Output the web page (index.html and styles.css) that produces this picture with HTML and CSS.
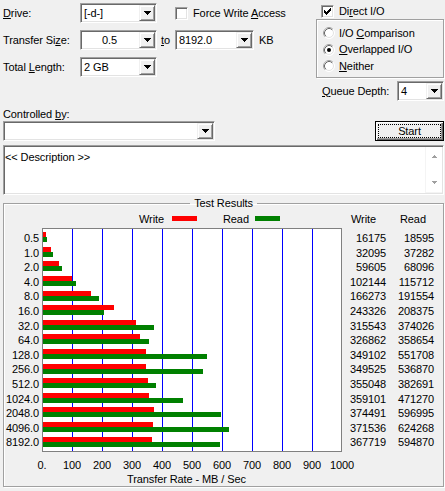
FILE: index.html
```html
<!DOCTYPE html>
<html>
<head>
<meta charset="utf-8">
<title>Disk Benchmark</title>
<link rel="stylesheet" href="styles.css">
</head>
<body>
<div class="app">
  <div class="top">
    <div class="left">
      <div class="row row1">
        <span class="lbl"><u>D</u>rive:</span>
        <div class="combo c-drive"><span class="cv">[-d-]</span><span class="dd"><svg width="7" height="4" viewBox="0 0 7 4"><path d="M0 0H7V1H6V2H5V3H4V4H3V3H2V2H1V1H0Z"/></svg></span></div>
        <span class="chk c-force"><span class="box"></span><span>Force Write <u>A</u>ccess</span></span>
      </div>
      <div class="row row2">
        <span class="lbl">Transfer Si<u>z</u>e:</span>
        <div class="combo c-drive"><span class="cv center">0.5</span><span class="dd"><svg width="7" height="4" viewBox="0 0 7 4"><path d="M0 0H7V1H6V2H5V3H4V4H3V3H2V2H1V1H0Z"/></svg></span></div>
        <span class="to"><u>t</u>o</span>
        <div class="combo c-ts2"><span class="cv">8192.0</span><span class="dd"><svg width="7" height="4" viewBox="0 0 7 4"><path d="M0 0H7V1H6V2H5V3H4V4H3V3H2V2H1V1H0Z"/></svg></span></div>
        <span class="kb">KB</span>
      </div>
      <div class="row row3">
        <span class="lbl">Total <u>L</u>ength:</span>
        <div class="combo c-drive"><span class="cv">2 GB</span><span class="dd"><svg width="7" height="4" viewBox="0 0 7 4"><path d="M0 0H7V1H6V2H5V3H4V4H3V3H2V2H1V1H0Z"/></svg></span></div>
      </div>
    </div>
    <div class="right">
      <div class="chk direct"><span class="box"><svg width="7" height="7" viewBox="0 0 7 7"><path d="M0 2h1v3h-1z M1 3h1v3h-1z M2 4h1v3h-1z M3 3h1v3h-1z M4 2h1v3h-1z M5 1h1v3h-1z M6 0h1v3h-1z"/></svg></span><span>Di<u>r</u>ect I/O</span></div>
      <div class="radiogroup">
        <div class="rrow"><svg class="rb" width="12" height="12" viewBox="0 0 12 12"><circle cx="6" cy="6" r="5.5" fill="#fff" stroke="#fff"/><path d="M2.11 9.89A5.5 5.5 0 0 1 9.89 2.11" fill="none" stroke="#a0a0a0"/><circle cx="6" cy="6" r="4.5" fill="#fff" stroke="#e3e3e3"/><path d="M2.82 9.18A4.5 4.5 0 0 1 9.18 2.82" fill="none" stroke="#696969"/></svg><span>I/O <u>C</u>omparison</span></div>
        <div class="rrow"><svg class="rb" width="12" height="12" viewBox="0 0 12 12"><circle cx="6" cy="6" r="5.5" fill="#fff" stroke="#fff"/><path d="M2.11 9.89A5.5 5.5 0 0 1 9.89 2.11" fill="none" stroke="#a0a0a0"/><circle cx="6" cy="6" r="4.5" fill="#fff" stroke="#e3e3e3"/><path d="M2.82 9.18A4.5 4.5 0 0 1 9.18 2.82" fill="none" stroke="#696969"/><circle cx="6" cy="6" r="2" fill="#000"/></svg><span><u>O</u>verlapped I/O</span></div>
        <div class="rrow"><svg class="rb" width="12" height="12" viewBox="0 0 12 12"><circle cx="6" cy="6" r="5.5" fill="#fff" stroke="#fff"/><path d="M2.11 9.89A5.5 5.5 0 0 1 9.89 2.11" fill="none" stroke="#a0a0a0"/><circle cx="6" cy="6" r="4.5" fill="#fff" stroke="#e3e3e3"/><path d="M2.82 9.18A4.5 4.5 0 0 1 9.18 2.82" fill="none" stroke="#696969"/></svg><span><u>N</u>either</span></div>
      </div>
      <div class="queue">
        <span class="qlbl"><u>Q</u>ueue Depth:</span>
        <div class="combo c-q"><span class="cv">4</span><span class="dd"><svg width="7" height="4" viewBox="0 0 7 4"><path d="M0 0H7V1H6V2H5V3H4V4H3V3H2V2H1V1H0Z"/></svg></span></div>
      </div>
    </div>
  </div>

  <div class="ctl-lbl">Controlled <u>b</u>y:</div>
  <div class="ctl-row">
    <div class="combo c-ctl"><span class="cv"></span><span class="dd"><svg width="7" height="4" viewBox="0 0 7 4"><path d="M0 0H7V1H6V2H5V3H4V4H3V3H2V2H1V1H0Z"/></svg></span></div>
    <div class="start"><div class="focus">Start</div></div>
  </div>

  <div class="desc">
    <div class="desc-text">&lt;&lt; Description &gt;&gt;</div>
    <div class="vscroll">
      <svg width="5" height="3" viewBox="0 0 5 3"><path d="M2 0H3V1H4V2H5V3H0V2H1V1H2Z"/></svg>
      <svg width="5" height="3" viewBox="0 0 5 3"><path d="M0 0H5V1H4V2H3V3H2V2H1V1H0Z"/></svg>
    </div>
  </div>

  <fieldset class="results">
    <legend>Test Results</legend>
    <div class="legrow">
      <div class="legleft">
        <span class="lt lt-w">Write</span><span class="lbar red"></span>
        <span class="lt lt-r">Read</span><span class="lbar green"></span>
      </div>
      <span class="hw">Write</span>
      <span class="hr">Read</span>
    </div>
    <div class="chart">
      <div class="ylab">
        <div>0.5</div><div>1.0</div><div>2.0</div><div>4.0</div><div>8.0</div><div>16.0</div><div>32.0</div><div>64.0</div><div>128.0</div><div>256.0</div><div>512.0</div><div>1024.0</div><div>2048.0</div><div>4096.0</div><div>8192.0</div>
      </div>
      <div class="plot">
        <div class="prow"><div class="bw" style="width:3px"></div><div class="br" style="width:4px"></div></div>
        <div class="prow"><div class="bw" style="width:8px"></div><div class="br" style="width:10px"></div></div>
        <div class="prow"><div class="bw" style="width:16px"></div><div class="br" style="width:19px"></div></div>
        <div class="prow"><div class="bw" style="width:29px"></div><div class="br" style="width:33px"></div></div>
        <div class="prow"><div class="bw" style="width:48px"></div><div class="br" style="width:56px"></div></div>
        <div class="prow"><div class="bw" style="width:71px"></div><div class="br" style="width:61px"></div></div>
        <div class="prow"><div class="bw" style="width:93px"></div><div class="br" style="width:111px"></div></div>
        <div class="prow"><div class="bw" style="width:97px"></div><div class="br" style="width:106px"></div></div>
        <div class="prow"><div class="bw" style="width:103px"></div><div class="br" style="width:164px"></div></div>
        <div class="prow"><div class="bw" style="width:103px"></div><div class="br" style="width:160px"></div></div>
        <div class="prow"><div class="bw" style="width:105px"></div><div class="br" style="width:113px"></div></div>
        <div class="prow"><div class="bw" style="width:106px"></div><div class="br" style="width:140px"></div></div>
        <div class="prow"><div class="bw" style="width:111px"></div><div class="br" style="width:178px"></div></div>
        <div class="prow"><div class="bw" style="width:110px"></div><div class="br" style="width:186px"></div></div>
        <div class="prow"><div class="bw" style="width:109px"></div><div class="br" style="width:177px"></div></div>
      </div>
      <div class="vcol vw">
        <div>16175</div><div>32095</div><div>59605</div><div>102144</div><div>166273</div><div>243326</div><div>315543</div><div>326862</div><div>349102</div><div>349525</div><div>355048</div><div>359101</div><div>374491</div><div>371536</div><div>367719</div>
      </div>
      <div class="vcol vr">
        <div>18595</div><div>37282</div><div>68096</div><div>115712</div><div>191554</div><div>208375</div><div>374026</div><div>358654</div><div>551708</div><div>536870</div><div>382691</div><div>471270</div><div>596995</div><div>624268</div><div>594870</div>
      </div>
    </div>
    <div class="xticks">
      <span>0.</span><span>100</span><span>200</span><span>300</span><span>400</span><span>500</span><span>600</span><span>700</span><span>800</span><span>900</span><span>1000</span>
    </div>
    <div class="xtitle">Transfer Rate - MB / Sec</div>
  </fieldset>
</div>
</body>
</html>
```

FILE: styles.css
```css
* { box-sizing: border-box; }
html, body { margin: 0; padding: 0; }
body {
  width: 445px;
  height: 491px;
  overflow: hidden;
  background: #f0f0f0;
  color: #000;
  font-family: "Liberation Sans", Arial, sans-serif;
  font-size: 11px;
  line-height: 13px;
  letter-spacing: -0.1px;
}
.app { padding: 0 1px 0 3px; }
u { text-decoration: underline; text-underline-offset: 1px; }

/* top area */
.top { display: flex; height: 101px; }
.left { width: 313px; }
.right { width: 128px; padding-top: 3px; }
.row { display: flex; align-items: center; height: 20px; }
.row1 { margin-top: 3px; }
.row2, .row3 { margin-top: 7px; }
.lbl { width: 77px; flex: none; }

.combo {
  display: flex;
  align-items: center;
  height: 20px;
  flex: none;
  padding: 1px;
  background: #fff;
  border: 1px solid;
  border-color: #a0a0a0 #fff #fff #a0a0a0;
  box-shadow: inset 1px 1px 0 #696969, inset -1px -1px 0 #e3e3e3;
}
.c-drive { width: 77px; }
.c-ts2 { width: 79px; }
.c-q { width: 47px; }
.c-ctl { width: 212px; }
.cv { flex: 1; padding-left: 2px; white-space: nowrap; overflow: hidden; line-height: 16px; }
.cv.center { text-align: center; padding-right: 4px; }
.dd {
  width: 16px;
  height: 16px;
  flex: none;
  display: flex;
  align-items: center;
  justify-content: center;
  background: #f0f0f0;
  border: 1px solid;
  border-color: #f0f0f0 #696969 #696969 #f0f0f0;
  box-shadow: inset 1px 1px 0 #fff, inset -1px -1px 0 #a0a0a0;
}
.dd svg { display: block; shape-rendering: crispEdges; }

.chk { display: flex; align-items: center; }
.box {
  width: 13px;
  height: 13px;
  flex: none;
  margin-right: 5px;
  display: flex;
  align-items: center;
  justify-content: center;
  background: #fff;
  border: 1px solid;
  border-color: #a0a0a0 #fff #fff #a0a0a0;
  box-shadow: inset 1px 1px 0 #696969, inset -1px -1px 0 #e3e3e3;
}
.box svg { display: block; shape-rendering: crispEdges; }
.c-force { margin-left: 18px; }
.to { margin-left: 4px; width: 14px; flex: none; }
.kb { margin-left: 5px; }

.direct { height: 16px; padding-left: 5px; }
.radiogroup {
  height: 59px;
  border: 1px solid #a0a0a0;
  box-shadow: inset 1px 1px 0 #fff, 1px 1px 0 #fff;
  padding: 5px 0 0 6px;
}
.rrow { display: flex; align-items: center; height: 16.5px; }
.rb { display: block; margin-right: 4px; flex: none; }
.queue { display: flex; align-items: center; margin-top: 3px; padding-left: 6px; height: 20px; }
.qlbl { width: 75px; flex: none; }

/* controlled by */
.ctl-lbl { margin-top: 7px; }
.ctl-row { display: flex; justify-content: space-between; height: 20px; }
.start {
  width: 69px;
  height: 20px;
  padding: 2px;
  display: flex;
  background: #f0f0f0;
  border: 1px solid #000;
  box-shadow: inset 1px 1px 0 #fff, inset -1px -1px 0 #696969, inset -2px -2px 0 #a0a0a0;
}
.focus {
  flex: 1;
  display: flex;
  align-items: center;
  justify-content: center;
  border: 1px dotted #000;
  line-height: 12px;
}

/* description */
.desc {
  display: flex;
  height: 50px;
  margin-top: 4px;
  padding: 1px;
  background: #fff;
  border: 1px solid;
  border-color: #a0a0a0 #fff #fff #a0a0a0;
  box-shadow: inset 1px 1px 0 #696969, inset -1px -1px 0 #e3e3e3;
}
.desc-text { flex: 1; padding: 4px 0 0 0; }
.vscroll {
  width: 17px;
  display: flex;
  flex-direction: column;
  justify-content: space-between;
  align-items: center;
  padding: 8px 0 8px;
  border-left: 1px solid #f4f4f4;
  border-bottom: 1px solid #f4f4f4;
}
.vscroll svg { display: block; fill: #a0a0a0; shape-rendering: crispEdges; }

/* results */
.results {
  margin: 2px 0 0;
  padding: 0;
  width: 441px;
  min-width: 0;
  border: 1px solid #a0a0a0;
  box-shadow: inset 1px 1px 0 #fff, 1px 1px 0 #fff;
}
.results legend { margin: 0 auto; padding: 0 4px; line-height: 13px; }

.legrow { display: flex; margin-top: 3px; height: 13px; }
.legleft { width: 338px; display: flex; padding-left: 135px; }
.lt-w { width: 33px; }
.lt-r { width: 32px; margin-left: 26px; }
.lbar { width: 25px; height: 5px; margin-top: 3px; }
.red { background: #ff0000; }
.green { background: #008000; }
.hw { width: 44px; padding-left: 9px; }
.hr { width: 48px; padding-left: 14px; }

.chart { display: flex; margin-top: 2px; height: 224px; }
.ylab { width: 35px; margin-right: 3px; padding-top: 3px; text-align: right; }
.ylab div, .vcol div { height: 14.6px; line-height: 14.6px; white-space: nowrap; }
.plot {
  width: 300px;
  height: 224px;
  padding-top: 1px;
  border: 1px solid #808080;
  background: #fff repeating-linear-gradient(to right, transparent 0 29px, #0000ff 29px 30px);
}
.prow { height: 14.6px; display: flex; flex-direction: column; justify-content: center; }
.bw { height: 5px; background: #ff0000; }
.br { height: 5px; background: #008000; }
.vcol { padding-top: 3px; text-align: right; }
.vw { width: 44px; }
.vr { width: 48px; }

.xticks { display: flex; margin-top: 7px; padding-left: 23px; }
.xticks span { width: 30px; text-align: center; flex: none; }
.xtitle { margin-top: 1px; padding-left: 123px; }
```
